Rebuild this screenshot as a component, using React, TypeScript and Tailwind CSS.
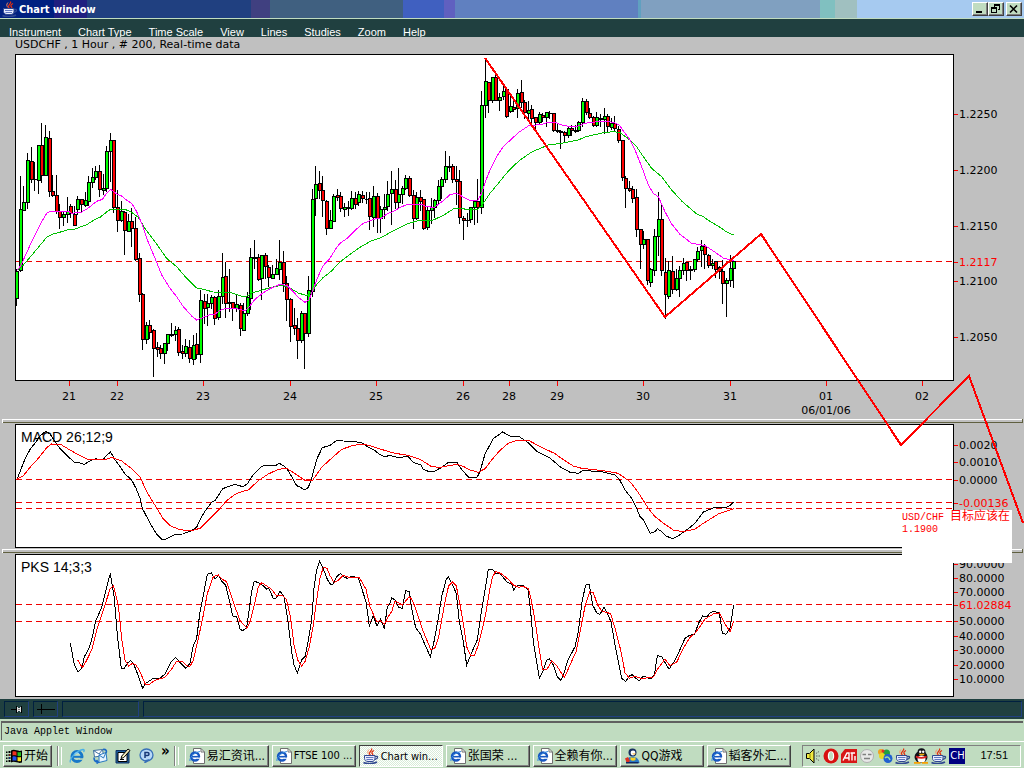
import React from "react";

type Kind = "g" | "r";
type Candle = [high: number, top: number, bottom: number, low: number, kind: Kind];

/* Chart coordinates use three units per screen pixel. */
const UNIT = 3;
const FIRST_X = 16.6;
const STEP = 3.604;

const candles: Candle[] = [
  [657, 663, 745, 765, "g"], [380, 478, 661, 663, "g"], [408, 457, 481, 481, "g"], [309, 331, 457, 475, "g"],
  [291, 334, 388, 397, "r"], [336, 388, 388, 420, "g"], [286, 286, 391, 429, "g"], [219, 286, 376, 398, "r"],
  [225, 262, 376, 376, "g"], [243, 265, 424, 440, "r"], [376, 424, 436, 440, "r"], [375, 436, 484, 490, "r"],
  [462, 484, 502, 534, "r"], [484, 493, 502, 525, "g"], [441, 484, 493, 516, "g"], [462, 469, 490, 502, "r"],
  [468, 493, 526, 526, "r"], [438, 448, 478, 492, "g"], [448, 448, 463, 484, "r"], [426, 451, 466, 470, "g"],
  [378, 397, 454, 465, "g"], [354, 382, 397, 413, "g"], [348, 364, 382, 388, "g"], [345, 364, 418, 440, "r"],
  [373, 415, 421, 434, "g"], [288, 304, 415, 425, "g"], [249, 271, 304, 395, "g"], [271, 271, 472, 486, "r"],
  [420, 472, 511, 545, "r"], [453, 484, 511, 515, "g"], [484, 487, 541, 612, "r"], [492, 514, 544, 545, "g"],
  [474, 514, 535, 590, "r"], [501, 535, 628, 632, "r"], [610, 625, 733, 753, "r"], [730, 733, 868, 897, "r"],
  [816, 826, 868, 879, "g"], [810, 826, 847, 864, "r"], [838, 841, 895, 978, "r"], [876, 892, 898, 920, "r"],
  [885, 895, 910, 924, "r"], [880, 880, 910, 941, "g"], [853, 853, 880, 900, "g"], [819, 853, 856, 860, "g"],
  [828, 841, 853, 870, "g"], [832, 838, 907, 915, "r"], [885, 904, 910, 924, "r"], [867, 889, 910, 920, "g"],
  [870, 892, 925, 936, "r"], [856, 886, 928, 942, "g"], [849, 883, 913, 926, "r"], [720, 751, 913, 936, "g"],
  [732, 754, 775, 819, "r"], [732, 760, 772, 825, "g"], [735, 742, 760, 776, "g"], [738, 742, 805, 822, "r"],
  [720, 739, 802, 808, "g"], [609, 682, 739, 760, "g"], [636, 679, 760, 803, "r"], [657, 757, 760, 785, "r"],
  [757, 757, 775, 810, "r"], [735, 763, 775, 785, "g"], [760, 766, 835, 855, "r"], [759, 790, 841, 841, "g"],
  [726, 742, 790, 797, "g"], [594, 622, 745, 778, "g"], [570, 622, 625, 654, "g"], [612, 622, 688, 690, "r"],
  [616, 616, 685, 747, "g"], [609, 616, 649, 684, "r"], [646, 652, 682, 708, "r"], [645, 673, 685, 686, "g"],
  [627, 655, 673, 673, "g"], [570, 637, 658, 687, "g"], [603, 637, 700, 723, "r"], [680, 700, 748, 810, "r"],
  [744, 748, 829, 873, "r"], [774, 826, 835, 852, "r"], [804, 835, 871, 924, "r"], [783, 790, 871, 876, "g"],
  [790, 790, 850, 954, "r"], [678, 721, 850, 858, "g"], [417, 448, 724, 738, "g"], [348, 403, 445, 497, "g"],
  [363, 400, 421, 444, "r"], [380, 421, 451, 498, "r"], [451, 454, 535, 552, "r"], [480, 511, 535, 536, "g"],
  [433, 439, 514, 514, "g"], [417, 436, 442, 450, "r"], [426, 439, 475, 484, "r"], [460, 472, 478, 500, "g"],
  [453, 472, 475, 497, "g"], [423, 445, 475, 479, "g"], [426, 445, 463, 475, "r"], [424, 433, 457, 465, "g"],
  [423, 436, 445, 456, "r"], [426, 448, 448, 459, "g"], [426, 445, 499, 537, "r"], [408, 439, 502, 528, "g"],
  [430, 439, 505, 546, "r"], [470, 478, 505, 546, "g"], [432, 472, 478, 504, "g"], [393, 433, 469, 480, "g"],
  [363, 418, 430, 522, "g"], [390, 418, 457, 474, "r"], [354, 433, 457, 474, "g"], [410, 415, 433, 459, "g"],
  [375, 385, 415, 418, "g"], [378, 385, 436, 440, "r"], [420, 436, 505, 534, "r"], [426, 442, 505, 507, "g"],
  [420, 442, 454, 480, "r"], [448, 448, 535, 537, "r"], [468, 481, 532, 537, "g"], [444, 472, 481, 520, "g"],
  [447, 451, 472, 501, "g"], [390, 409, 451, 459, "g"], [381, 388, 409, 444, "g"], [303, 349, 388, 396, "g"],
  [318, 349, 352, 363, "g"], [342, 349, 388, 398, "r"], [350, 388, 394, 462, "r"], [360, 394, 502, 519, "r"],
  [500, 505, 511, 567, "r"], [490, 511, 511, 528, "g"], [472, 472, 508, 517, "g"], [450, 454, 472, 522, "g"],
  [387, 454, 472, 516, "r"], [123, 166, 472, 489, "g"], [30, 94, 166, 201, "g"], [97, 97, 151, 186, "r"],
  [82, 82, 151, 157, "g"], [63, 82, 151, 152, "r"], [129, 142, 151, 180, "g"], [99, 124, 139, 148, "g"],
  [115, 118, 199, 203, "r"], [138, 169, 184, 188, "g"], [155, 172, 178, 184, "r"], [117, 130, 175, 202, "g"],
  [90, 127, 157, 172, "r"], [151, 157, 187, 205, "r"], [153, 181, 190, 205, "g"], [167, 178, 206, 220, "r"],
  [203, 203, 217, 235, "r"], [187, 193, 217, 222, "g"], [190, 196, 202, 214, "r"], [187, 187, 202, 230, "g"],
  [183, 190, 190, 204, "g"], [190, 190, 241, 244, "r"], [220, 241, 244, 248, "g"], [240, 244, 247, 294, "g"],
  [244, 247, 256, 273, "r"], [228, 235, 256, 263, "g"], [225, 235, 241, 255, "r"], [225, 241, 244, 248, "g"],
  [213, 217, 241, 245, "g"], [144, 154, 217, 228, "g"], [147, 154, 187, 192, "r"], [174, 190, 202, 205, "r"],
  [199, 202, 226, 228, "r"], [187, 202, 226, 230, "g"], [193, 205, 208, 228, "g"], [174, 199, 208, 249, "g"],
  [193, 199, 229, 243, "r"], [205, 220, 232, 237, "g"], [198, 220, 235, 242, "r"], [228, 238, 271, 276, "r"],
  [271, 271, 382, 390, "r"], [379, 385, 415, 471, "r"], [393, 415, 422, 425, "r"], [410, 418, 445, 456, "r"],
  [417, 442, 538, 558, "r"], [538, 538, 583, 654, "r"], [543, 568, 583, 595, "g"], [568, 568, 691, 702, "r"],
  [655, 658, 697, 708, "g"], [537, 559, 661, 675, "g"], [426, 508, 559, 615, "g"], [465, 508, 661, 675, "r"],
  [625, 667, 733, 805, "r"], [633, 661, 739, 745, "g"], [620, 664, 718, 731, "r"], [657, 685, 718, 722, "g"],
  [648, 661, 685, 738, "g"], [624, 640, 661, 672, "g"], [636, 637, 661, 690, "r"], [650, 658, 661, 687, "g"],
  [627, 628, 658, 663, "g"], [592, 604, 628, 633, "g"], [570, 589, 601, 648, "g"], [583, 589, 613, 654, "r"],
  [612, 616, 646, 652, "r"], [628, 640, 646, 654, "g"], [633, 634, 658, 682, "r"], [650, 652, 664, 684, "r"],
  [630, 664, 700, 759, "r"], [684, 691, 700, 800, "g"], [615, 655, 691, 708, "g"], [630, 634, 655, 711, "g"],
];

const fastAverage =
  "52,660 60,650 70,630 95,575 110,545 125,515 140,490 152,484 205,484 215,490 245,486 265,474 290,454 307,448 320,430 332,418 350,432 365,438 375,447 395,460 410,485 425,520 440,565 465,625 485,675 510,715 530,740 550,770 575,798 590,810 600,806 630,794 645,792 665,778 690,775 715,777 735,782 745,774 765,748 790,728 810,716 840,703 860,706 875,720 895,742 915,757 927,750 938,722 950,690 965,655 975,640 990,625 1005,600 1020,580 1040,566 1065,541 1090,520 1120,508 1145,504 1160,492 1180,484 1205,470 1225,463 1265,463 1280,470 1303,472 1325,456 1350,434 1370,430 1395,444 1410,451 1433,452 1445,430 1455,398 1470,360 1490,320 1510,290 1528,273 1555,248 1585,228 1630,222 1645,217 1665,217 1685,225 1710,230 1730,230 1755,220 1785,216 1815,213 1840,217 1857,224 1870,243 1890,270 1907,305 1925,350 1945,405 1960,430 1975,440 1995,485 2015,522 2040,553 2075,580 2095,583 2115,587 2140,603 2170,624 2201,632";
const slowAverage =
  "55,658 70,645 100,610 140,562 160,552 185,545 205,539 225,537 260,524 285,508 300,502 320,486 332,478 375,478 395,487 415,502 435,535 465,575 500,625 530,650 560,685 590,714 605,717 640,726 690,727 725,739 740,739 760,727 780,722 810,713 845,706 870,714 895,729 920,737 935,727 950,703 970,682 995,663 1015,640 1050,613 1080,592 1115,572 1145,562 1175,545 1205,530 1225,520 1260,511 1300,510 1330,496 1360,477 1380,475 1400,478 1435,477 1450,460 1470,430 1495,400 1515,375 1530,358 1560,330 1595,306 1645,285 1690,279 1735,270 1755,261 1810,248 1840,245 1860,248 1885,266 1910,290 1930,320 1955,355 1985,380 2015,420 2045,453 2090,492 2110,500 2130,514 2160,532 2180,546 2201,555";
const macdLine =
  "52,297 60,275 75,237 92,205 105,190 120,168 137,154 150,162 165,185 180,205 200,226 222,246 240,249 253,253 270,243 287,236 308,240 320,226 332,216 345,240 362,262 375,282 395,300 408,325 420,355 427,385 440,410 455,438 470,463 485,478 495,478 525,463 548,462 570,454 590,442 600,420 615,393 635,367 645,362 668,326 690,318 705,313 728,320 742,312 758,286 785,259 800,256 828,256 838,250 852,258 865,272 890,317 900,321 914,330 925,322 935,295 950,238 967,203 990,196 1010,181 1030,183 1065,185 1090,190 1105,202 1125,212 1140,224 1155,230 1170,226 1182,230 1195,232 1225,230 1240,248 1262,254 1270,268 1285,274 1305,273 1325,262 1345,247 1370,246 1385,268 1405,291 1430,294 1440,275 1455,222 1480,176 1508,156 1530,168 1545,171 1558,170 1570,178 1585,188 1610,214 1650,234 1680,260 1710,277 1735,280 1750,271 1810,276 1845,285 1858,298 1875,330 1895,355 1910,385 1920,410 1930,420 1950,460 1965,455 1972,446 1985,455 1998,468 2018,476 2035,468 2052,455 2070,442 2085,430 2110,396 2145,382 2180,382 2190,376 2201,366";
const macdSignal =
  "52,297 70,287 95,256 115,235 140,203 155,192 185,195 210,210 235,224 260,237 320,237 335,232 365,243 390,262 420,290 440,335 470,384 490,417 510,437 540,449 570,453 600,445 625,420 660,385 680,362 705,343 728,334 745,330 775,302 805,282 835,268 860,265 885,281 915,301 937,302 965,262 1000,230 1025,208 1060,196 1090,192 1120,200 1140,207 1185,220 1225,226 1260,238 1295,260 1320,262 1370,253 1390,259 1410,270 1435,277 1455,266 1475,240 1500,211 1525,190 1550,181 1585,181 1610,194 1640,209 1665,221 1690,239 1720,258 1745,265 1810,272 1855,280 1890,305 1915,338 1945,385 1965,410 1995,433 2020,450 2050,455 2085,447 2110,430 2155,402 2201,386";
const pksFast =
  "211,294 222,355 234,382 246,368 253,335 268,308 278,272 287,228 305,188 318,135 331,85 343,160 352,270 364,371 373,370 382,355 392,346 402,360 412,385 428,430 436,416 458,401 480,400 495,387 512,352 527,337 540,353 557,370 570,355 580,300 590,280 600,200 612,140 622,88 634,84 645,103 656,90 665,108 677,120 690,175 698,213 710,215 720,252 728,257 740,248 748,190 755,140 763,108 778,115 790,122 800,132 806,130 820,160 828,160 840,138 852,155 862,215 875,320 882,360 892,383 905,345 915,335 925,285 935,225 942,130 950,75 959,49 970,72 982,103 992,119 1000,117 1010,95 1021,86 1032,96 1042,100 1055,94 1075,98 1085,130 1098,170 1108,243 1120,212 1131,244 1142,222 1153,252 1162,185 1168,180 1175,158 1185,165 1195,186 1207,190 1217,137 1228,140 1235,190 1247,248 1262,268 1275,300 1291,335 1302,290 1315,220 1325,155 1338,105 1345,95 1355,115 1369,145 1378,230 1390,290 1400,360 1412,330 1432,284 1445,195 1455,135 1465,73 1478,73 1487,86 1500,85 1520,110 1535,118 1541,135 1552,121 1570,121 1584,133 1592,200 1600,290 1610,350 1618,400 1630,375 1640,345 1648,341 1660,360 1672,395 1682,406 1690,392 1702,350 1712,330 1725,305 1735,260 1746,170 1757,120 1768,118 1778,180 1790,203 1800,208 1812,186 1822,205 1833,230 1845,300 1855,350 1865,400 1877,409 1888,393 1897,389 1907,400 1918,407 1930,393 1952,402 1963,390 1972,332 1985,335 2007,373 2022,350 2035,325 2055,280 2068,271 2083,268 2098,230 2108,213 2120,216 2132,202 2143,199 2158,204 2167,264 2178,268 2190,250 2201,180";
const pksSlow =
  "233,345 247,368 258,350 275,315 293,245 310,195 330,133 340,122 355,180 365,280 375,345 386,363 397,355 408,360 420,380 436,418 448,418 465,406 495,397 515,372 530,348 545,348 560,362 570,364 580,345 595,280 610,210 622,145 640,95 655,90 667,103 680,110 690,140 703,180 720,227 740,249 750,232 763,180 775,125 785,113 800,123 815,133 830,153 848,151 860,165 872,220 882,300 893,345 905,363 915,350 928,305 940,240 950,165 960,100 970,66 981,70 990,92 1002,112 1015,106 1030,91 1045,96 1078,98 1098,133 1110,185 1120,208 1130,230 1142,226 1153,238 1165,215 1175,200 1185,168 1207,180 1228,155 1238,167 1255,215 1268,255 1293,315 1305,308 1315,280 1325,225 1335,170 1346,122 1357,111 1369,123 1380,180 1390,235 1400,305 1412,332 1423,332 1435,300 1450,240 1460,190 1468,140 1477,98 1487,79 1505,87 1525,103 1540,120 1555,127 1568,124 1585,130 1595,170 1607,240 1617,310 1628,373 1640,375 1655,348 1670,362 1693,398 1710,360 1728,320 1742,250 1755,185 1769,140 1780,143 1792,178 1805,198 1832,206 1845,250 1862,315 1875,383 1888,400 1905,394 1925,401 1960,396 1973,372 1995,342 2010,362 2030,352 2050,310 2070,277 2085,265 2100,245 2115,222 2140,207 2158,204 2172,232 2190,260 2201,228";

const LABEL = "font-['DejaVu_Sans',sans-serif]";
const TAHOMA = "font-['DejaVu_Sans_Condensed','DejaVu_Sans',sans-serif]";

const snap = (v: number) => Math.floor(v / UNIT) * UNIT;

function CandleShape({ index, candle }: { index: number; candle: Candle }) {
  const [high, top, bottom, low, kind] = candle;
  const x = Math.floor(FIRST_X + STEP * index) * UNIT;
  const y0 = snap(top);
  const y1 = snap(bottom) + UNIT;
  return (
    <g>
      <rect x={x} y={snap(high)} width={UNIT} height={snap(low) - snap(high) + UNIT} fill="#000" />
      <rect x={x - UNIT} y={y0} width={4 * UNIT} height={y1 - y0} fill="#000" />
      {y1 - y0 > 2 * UNIT && (
        <rect x={x} y={y0 + UNIT} width={2 * UNIT} height={y1 - y0 - 2 * UNIT} fill={kind === "g" ? "#00ff00" : "#ff0000"} />
      )}
    </g>
  );
}

function DashLine({ y }: { y: number }) {
  return <line x1="48" x2="2859" y1={y} y2={y} stroke="#f00000" strokeWidth="3" strokeDasharray="18 12" />;
}

function Curve({ points, color }: { points: string; color: string }) {
  return <polyline points={points} fill="none" stroke={color} strokeWidth="3" />;
}

type Mark = { y: number; text: string; live?: boolean };

function ValueAxis({ marks }: { marks: Mark[] }) {
  return (
    <svg className={`w-[70px] shrink-0 self-stretch overflow-visible text-[11px] ${LABEL}`}>
      {marks.map((m) => (
        <g key={m.text}>
          <rect x="0" y={m.y} width="4" height="1" fill="#ff0000" />
          <text x="5" y={m.y + 4} fill={m.live ? "#ff0000" : "#000"}>
            {m.text}
          </text>
        </g>
      ))}
    </svg>
  );
}

function Plot({ viewBox, label, children }: { viewBox: string; label: string; children: React.ReactNode }) {
  return (
    <svg
      role="img"
      aria-label={label}
      viewBox={viewBox}
      preserveAspectRatio="none"
      shapeRendering="crispEdges"
      className="absolute inset-0 h-full w-full"
    >
      {children}
    </svg>
  );
}

const dates = [
  [69, "21"], [117, "22"], [203, "23"], [290, "24"], [376, "25"], [463, "26"],
  [509, "28"], [557, "29"], [643, "30"], [730, "31"], [826, "01"], [922, "02"],
] as const;

function DateAxis() {
  return (
    <div className="pl-4 pr-[71px]">
      <svg className={`block h-[38px] w-full text-[11px] ${LABEL}`}>
        {dates.map(([x, d]) => {
          const at = `${((x - 16) / 937) * 100}%`;
          return (
            <g key={d}>
              <line x1={at} x2={at} y1="0" y2="5" stroke="#ff0000" shapeRendering="crispEdges" />
              <text x={at} y="19" textAnchor="middle">
                {d}
              </text>
            </g>
          );
        })}
        <text x={`${((826 - 16) / 937) * 100}%`} y="33" textAnchor="middle">
          06/01/06
        </text>
      </svg>
    </div>
  );
}

function Splitter() {
  return (
    <div className="ml-[2px] mr-px flex h-1 border-x border-l-white border-r-[#606040]">
      <div className="flex-1 border-y border-b-[#606040] border-t-white" />
    </div>
  );
}

/* ---------- icons ---------- */

function JavaCup({ size = "h-4 w-4" }: { size?: string }) {
  return (
    <svg viewBox="0 0 16 16" className={`${size} shrink-0`} fill="none" aria-hidden="true">
      <path d="M8.500 0.500c1.500 2-3 3.200-2 5.500 .3.7 1 1.200 1 2M11 2.500c-2.500 1.200-2.500 2.500-1.500 3.500 .6.7.2 1.500-.5 2" stroke="#e03010" strokeWidth="1.300" />
      <path d="M6 1.500c-1.800 2-1.500 3.500 0 5" stroke="#ff9060" strokeWidth="0.900" />
      <path d="M1.500 7.500h10.500v3c0 1.800-1.500 3-3 3H5c-2 0-3.500-1.500-3.500-3z" fill="#e8ecff" stroke="#304890" />
      <path d="M3 9.500h7.500M3.500 11.500h6.500" stroke="#6078c0" />
      <path d="M12 8.500c3.500-1 3.500 2-.5 3" stroke="#304890" strokeWidth="1.300" />
      <path d="M.5 14.500c3 1.500 10 1.500 13.500-.5" stroke="#304890" strokeWidth="1.600" />
    </svg>
  );
}

function ExplorerGlyph() {
  return (
    <svg viewBox="0 0 16 16" className="h-4 w-4 shrink-0" fill="none" aria-hidden="true">
      <circle cx="8" cy="8.500" r="5" stroke="#1878c8" strokeWidth="3" />
      <path d="M3.500 8.800h10" stroke="#1878c8" strokeWidth="2" />
      <path d="M10 10.300h5v1.500h-5z" fill="#c0dcc0" />
      <path d="M1.500 14.500C0 12 6 3 14 1.500c1.500 0 1.500 1.500.5 2.500" stroke="#48b0e8" strokeWidth="1.300" />
      <path d="M5.500 6c1-1.200 3-1.500 4.500-.5" stroke="#a0e0ff" strokeWidth="1" />
    </svg>
  );
}

function PageIcon() {
  return (
    <svg viewBox="0 0 16 16" className="h-4 w-4 shrink-0" fill="none" aria-hidden="true">
      <path d="M4.500.5h7.500l3.500 3.500v11.500h-11z" fill="#fff" stroke="#707070" />
      <path d="M12 .5v3.500h3.500" stroke="#707070" />
      <circle cx="6" cy="8.500" r="4" fill="#fff" stroke="#1858c0" strokeWidth="2.400" />
      <path d="M2.500 8.700h7" stroke="#1858c0" strokeWidth="1.600" />
      <path d="M8 9.600h3.500v1.200H8z" fill="#fff" />
      <path d="M1 13C0 10.500 4.500 4.500 11 3.500" stroke="#3890e0" />
    </svg>
  );
}

function WindowsFlag() {
  return (
    <svg viewBox="0 0 18 16" className="h-4 w-[18px] shrink-0" aria-hidden="true">
      <path d="M6 2.500c4-2 6.500 1.500 11 0v12c-4.500 1.500-7-2-11 0z" fill="#000" />
      <path d="M7.500 3.600c1.500-.6 2.800-.3 4 .1v4c-1.300-.4-2.500-.6-4-.1z" fill="#f03020" />
      <path d="M12.500 4c1.200.3 2.200.4 3.500.1v3.900c-1.300.3-2.300.2-3.500-.1z" fill="#20c020" />
      <path d="M7.500 8.700c1.500-.6 2.800-.3 4 .1v4c-1.300-.4-2.500-.6-4-.1z" fill="#2050f0" />
      <path d="M12.500 9c1.200.3 2.200.4 3.500.1v3.900c-1.300.3-2.300.2-3.500-.1z" fill="#f8e020" />
      <path d="M1 3.500h1.500v1.500H1zM3.500 3h2v2h-2zM1 6.500h1.500V8H1zM3.500 6h2v2h-2zM1 9.500h1.500V11H1zM3.500 9h2v2h-2zM1 12.500h1.500V14H1zM3.500 12h2v2h-2z" fill="#000" />
      <path d="M4 6.500h1v1H4z" fill="#f03020" />
      <path d="M4 9.500h1v1H4z" fill="#2050f0" />
    </svg>
  );
}

function OutlookIcon() {
  return (
    <svg viewBox="0 0 16 16" className="h-4 w-4 shrink-0" fill="none" aria-hidden="true">
      <path d="M1.500 2.500l9-1 1 6-9 1.500z" fill="#fff" stroke="#4070a0" />
      <path d="M1.500 2.500l5.500 3.500 3.500-4.500" stroke="#4070a0" />
      <path d="M7 7l7-2.500 1 8-8 2z" fill="#e8f4ff" stroke="#2878c0" />
      <path d="M11 1.500c3-.5 4 1.500 3 3.500M2 9.500c0 3 1.500 4.500 4 4.500l-1.500-2M4.500 15.500l2-1.500" stroke="#1868c8" strokeWidth="1.600" />
      <path d="M7 7l4.500 3L14 4.500" stroke="#2878c0" />
    </svg>
  );
}

function DesktopIcon() {
  return (
    <svg viewBox="0 0 16 16" className="h-4 w-4 shrink-0" fill="none" aria-hidden="true">
      <path d="M1 2.500h13v12.500H1z" fill="#2060a0" stroke="#103060" />
      <path d="M3 4.500h9v9H3z" fill="#fff" stroke="#000" />
      <path d="M6 10.500l.8-2.500 6.200-7 2 1.500-6.200 7z" fill="#f8f0c0" stroke="#000" />
      <path d="M5 11.500h4" stroke="#000" />
    </svg>
  );
}

function PlayerIcon() {
  return (
    <svg viewBox="0 0 16 16" className="h-4 w-4 shrink-0" fill="none" aria-hidden="true">
      <ellipse cx="8.500" cy="7" rx="6.500" ry="6" fill="#b8d8f8" stroke="#3870b8" strokeWidth="1.300" />
      <path d="M6 15c2 .5 5-2 5.500-4l-4 1z" fill="#3870b8" />
      <path d="M7 10V4.500h2.500c2 0 2 3 0 3H7" stroke="#183878" strokeWidth="1.500" />
    </svg>
  );
}

function Penguin() {
  return (
    <svg viewBox="0 0 16 16" className="h-4 w-4 shrink-0" aria-hidden="true">
      <ellipse cx="8" cy="9" rx="6.500" ry="6" fill="#101018" />
      <ellipse cx="8.500" cy="4.500" rx="4" ry="4.200" fill="#101018" />
      <ellipse cx="8.500" cy="11" rx="4" ry="3.600" fill="#fff" />
      <circle cx="7.200" cy="3.800" r="1.200" fill="#fff" />
      <circle cx="10.200" cy="3.800" r="1.200" fill="#fff" />
      <path d="M5.500 5.800h6.500l-1.500 1.400h-3.500z" fill="#f8b000" />
      <path d="M3 7.800c3 1.500 7.500 1.500 10.500 0l.3 1.800c-3.500 1.600-7.500 1.600-11 0z" fill="#e02020" />
      <path d="M1 14h6.500v1.800H1zM9 14h6v1.800H9z" fill="#f8a000" />
    </svg>
  );
}

function GameIcon() {
  return (
    <svg viewBox="0 0 16 16" className="h-4 w-4 shrink-0" aria-hidden="true">
      <circle cx="8.500" cy="4.500" r="4" fill="#183060" />
      <circle cx="9" cy="5" r="2.400" fill="#fff" />
      <path d="M8 5.500h4l-1.800 1.300z" fill="#f8a000" />
      <path d="M2 15c0-4 3-6.500 6.500-6.500S15 11 15.500 15z" fill="#2878c8" />
      <path d="M1 10.500l3-1.500 2 4-3 2.500z" fill="#e03020" />
      <path d="M6.500 9c1.500 1 3.500 1 5 0v3c-1.500 1-3.500 1-5 0z" fill="#f8d020" />
      <path d="M2 14h12.500v1.500H2z" fill="#102860" />
    </svg>
  );
}

function Speaker() {
  return (
    <svg viewBox="0 0 16 16" className="h-4 w-4 shrink-0" fill="none" aria-hidden="true">
      <path d="M1.500 5.500h3l4.500-4.500v14l-4.500-4.500h-3z" fill="#f0e840" stroke="#000" />
      <path d="M5 5.500v5" stroke="#808000" />
      <path d="M11 8h4M11 5.500l3-2M11 10.500l3 2" stroke="#606060" strokeDasharray="1.500 1" />
    </svg>
  );
}

function OperaIcon() {
  return (
    <svg viewBox="0 0 16 16" className="h-4 w-4 shrink-0" aria-hidden="true">
      <ellipse cx="8" cy="8" rx="7.500" ry="7.500" fill="#d81010" />
      <ellipse cx="8" cy="8" rx="3.200" ry="4.800" fill="#fff" />
      <ellipse cx="8" cy="8" rx="2" ry="4" fill="#c0dcc0" />
    </svg>
  );
}

function GraphicsIcon() {
  return (
    <svg viewBox="0 0 16 16" className="h-4 w-4 shrink-0" fill="none" aria-hidden="true">
      <path d="M4 1h12v14H0V6z" fill="#d81818" />
      <path d="M2 12.500L6 5h2v7.500M4 10h4M9.500 5h4.500M11 5v7.500M14 8v4.500" stroke="#fff" strokeWidth="1.400" />
    </svg>
  );
}

function FaceIcon() {
  return (
    <svg viewBox="0 0 16 16" className="h-4 w-4 shrink-0" fill="none" aria-hidden="true">
      <circle cx="8" cy="8" r="6.500" fill="#e8e8e8" stroke="#b0b0b0" />
      <path d="M3.500 6.500h3.500M9 6.500h3.500M5 10.500h6" stroke="#808080" strokeWidth="1.300" />
    </svg>
  );
}

function MessengerIcon() {
  return (
    <svg viewBox="0 0 16 16" className="h-4 w-4 shrink-0" aria-hidden="true">
      <circle cx="4" cy="4" r="3" fill="#f0a020" />
      <circle cx="9.500" cy="5" r="3.500" fill="#20a040" />
      <circle cx="5" cy="8" r="3" fill="#e8d820" />
      <circle cx="11" cy="10.500" r="4.500" fill="#2060d0" />
      <path d="M8 10c2-2 4-1 5 2" stroke="#a0e0a0" strokeWidth="1.500" fill="none" />
      <circle cx="6" cy="3" r="1.500" fill="#e03020" />
    </svg>
  );
}

/* ---------- window parts ---------- */

const raised = "border border-b-[#404040] border-l-white border-r-[#404040] border-t-white shadow-[inset_-1px_-1px_0_#808080]";

function TitleBar() {
  const box = `flex h-[14px] w-4 items-center justify-center bg-[#c0dcc0] ${raised}`;
  return (
    <header className="flex h-[19px] items-center border-b border-[#c0dcc0] bg-[linear-gradient(90deg,#002080_5.3%,#202080_5.3%_8.5%,#204080_8.5%_24.5%,#404080_24.5%_26.4%,#406080_26.4%_39.4%,#4060c0_39.4%_43.4%,#6060c0_43.4%_44.4%,#6080c0_44.4%_62.3%,#60a0c0_62.3%_62.6%,#80a0c0_62.6%_80.1%,#80c0c0_80.1%_81.5%,#a0c0c0_81.5%_83.7%,#a6caf0_83.7%)] pl-[2px] pr-[2px]">
      <JavaCup />
      <h1 className={`ml-px flex-1 text-[11px] font-bold leading-none text-white ${TAHOMA}`}>Chart window</h1>
      <button type="button" aria-label="Minimize" className={box}>
        <svg viewBox="0 0 12 12" className="h-3 w-3" shapeRendering="crispEdges" aria-hidden="true">
          <path d="M2 8h6v2H2z" />
        </svg>
      </button>
      <button type="button" aria-label="Restore" className={box}>
        <svg viewBox="0 0 12 12" className="h-3 w-3" shapeRendering="crispEdges" fill="none" stroke="#000" aria-hidden="true">
          <path d="M4.500 4V1.500h5v5H8M4 2.500h6M1.500 5.500h5v4h-5zM1 4.500h6" />
        </svg>
      </button>
      <button type="button" aria-label="Close" className={`ml-[2px] ${box}`}>
        <svg viewBox="0 0 12 12" className="h-3 w-3" aria-hidden="true">
          <path d="M2 2.500l7 7M9 2.500l-7 7" stroke="#000" strokeWidth="1.600" />
        </svg>
      </button>
    </header>
  );
}

const menus = ["Instrument", "Chart Type", "Time Scale", "View", "Lines", "Studies", "Zoom", "Help"];

function MenuBar() {
  return (
    <nav className="flex h-[18px] items-end gap-[17px] overflow-hidden bg-[#204040] pl-[9px] font-['Liberation_Sans',sans-serif] text-[11px] leading-[9px] text-white">
      {menus.map((m) => (
        <button key={m} type="button">
          {m}
        </button>
      ))}
    </nav>
  );
}

const cell = "border border-b-[#204080] border-l-[#002040] border-r-[#204080] border-t-[#002040]";

function ToolStrip() {
  return (
    <div className="flex h-5 gap-1 bg-[#204040] py-[2px] pl-1 pr-[2px]">
      <button type="button" aria-label="Pin window" className={`flex w-[25px] items-center justify-center ${cell}`}>
        <svg viewBox="0 0 12 9" className="h-[9px] w-3" shapeRendering="crispEdges" aria-hidden="true">
          <path d="M0 4h5v1H0zM5 1h1v7H5zM10 1h1v7h-1z" />
          <path d="M6 2h1v1h2V2h1v5H9V6H7v1H6z" fill="#e0e0e0" />
          <path d="M7 4h2v1H7z" fill="#808080" />
        </svg>
      </button>
      <button type="button" aria-label="Crosshair" className={`flex w-[25px] items-center justify-center ${cell}`}>
        <svg viewBox="0 0 18 10" className="h-[10px] w-[18px]" shapeRendering="crispEdges" aria-hidden="true">
          <path d="M0 5h18v1H0zM4 0h1v10H4z" />
        </svg>
      </button>
      <div className={`w-[77px] ${cell}`} />
      <div className={`flex-1 ${cell}`} />
    </div>
  );
}

const tasks = [
  { text: "易汇资讯...", icon: <PageIcon />, cjk: true },
  { text: "FTSE 100 ...", icon: <PageIcon /> },
  { text: "Chart win...", icon: <JavaCup />, active: true },
  { text: "张国荣 ...", icon: <PageIcon />, cjk: true },
  { text: "全赖有你...", icon: <PageIcon />, cjk: true },
  { text: "QQ游戏", icon: <GameIcon />, cjk: true },
  { text: "韬客外汇...", icon: <PageIcon />, cjk: true },
];

function Divider() {
  return <span className="h-[20px] w-[2px] shrink-0 border-l border-r border-l-[#808080] border-r-white" />;
}

function TaskBar() {
  const text = "font-['DejaVu_Sans_Condensed','Noto_Sans_CJK_SC',sans-serif] text-[12px] leading-none";
  return (
    <footer className={`flex h-[27px] items-center border-t border-white pl-[3px] pr-[3px] pt-px ${text}`}>
      <button type="button" className={`flex h-[22px] w-[49px] shrink-0 items-center gap-px pl-px ${raised}`}>
        <WindowsFlag />
        <span className="whitespace-nowrap">开始</span>
      </button>
      <span className="ml-[5px] flex gap-[2px]">
        <Divider />
        <span className="h-[18px] w-[2px] self-center border-l border-white" />
      </span>
      <div className="ml-[6px] flex shrink-0 items-center gap-[7px]">
        <button type="button" aria-label="Internet Explorer"><ExplorerGlyph /></button>
        <button type="button" aria-label="Mail"><OutlookIcon /></button>
        <button type="button" aria-label="Show desktop"><DesktopIcon /></button>
        <button type="button" aria-label="Media player"><PlayerIcon /></button>
        <button type="button" aria-label="More shortcuts" className="-mt-2 text-[15px] font-bold leading-none">»</button>
      </div>
      <span className="ml-1 flex gap-[2px]">
        <Divider />
        <span className="h-[18px] w-[2px] self-center border-l border-white" />
      </span>
      <div className="ml-[5px] flex min-w-0 flex-1 gap-[3px]">
        {tasks.map((t) => (
          <button
            key={t.text}
            type="button"
            className={`flex h-[22px] min-w-0 flex-1 items-center gap-[2px] overflow-hidden whitespace-nowrap pl-[3px] ${
              t.cjk ? "text-[12px]" : "text-[11px]"
            } ${
              t.active
                ? "border border-b-white border-l-[#404040] border-r-white border-t-[#404040] bg-[repeating-conic-gradient(#ffffff_0_25%,#d8ecd8_0_50%)] bg-[length:2px_2px] pt-px"
                : raised
            }`}
          >
            {t.icon}
            <span>{t.text}</span>
          </button>
        ))}
      </div>
      <div className="ml-3 flex h-[22px] shrink-0 items-center border border-b-white border-l-[#808080] border-r-white border-t-[#808080] pl-[2px] pr-3">
        <div className="flex gap-[2px]">
          <Speaker />
          <OperaIcon />
          <GraphicsIcon />
          <FaceIcon />
          <MessengerIcon />
          <JavaCup />
          <Penguin />
          <JavaCup />
          <span className="flex h-4 w-4 items-center justify-center bg-[#000080] text-[11px] text-white">CH</span>
        </div>
        <time className="ml-[15px] font-['Liberation_Sans',sans-serif] text-[11px]">17:51</time>
      </div>
    </footer>
  );
}

const caption = "relative pl-[5px] pt-[5px] font-['Liberation_Sans',sans-serif] text-[14px] leading-[15px]";

export default function App() {
  return (
    <div className="relative flex min-h-screen flex-col overflow-hidden bg-[#c0dcc0] text-black">
      <TitleBar />
      <MenuBar />

      <main className="flex flex-col bg-[#c0c0c0]">
        <p className={`h-[17px] pl-[15px] text-[11px] leading-[15px] ${LABEL}`}>USDCHF , 1 Hour , # 200, Real-time data</p>
        <section className="flex h-[327px] pl-[15px]">
          <div className="relative flex-1 border border-black bg-white">
            <Plot viewBox="48 15 2811 975" label="USDCHF hourly candles">
              <DashLine y={634.5} />
              {candles.map((c, i) => (
                <CandleShape key={i} index={i} candle={c} />
              ))}
              <Curve points={slowAverage} color="#00c000" />
              <Curve points={fastAverage} color="#ff00ff" />
            </Plot>
          </div>
          <ValueAxis
            marks={[
              { y: 60, text: "1.2250" },
              { y: 116, text: "1.2200" },
              { y: 172, text: "1.2150" },
              { y: 208, text: "1.2117", live: true },
              { y: 227, text: "1.2100" },
              { y: 283, text: "1.2050" },
            ]}
          />
        </section>
        <DateAxis />
        <Splitter />
        <section className="mt-px flex h-[124px] pl-[15px]">
          <div className="relative flex-1 border border-black bg-white">
            <h2 className={caption}>MACD 26;12;9</h2>
            <Plot viewBox="48 135 2811 366" label="MACD">
              <DashLine y={298.5} />
              <DashLine y={367.5} />
              <DashLine y={385.5} />
              <Curve points={macdLine} color="#000" />
              <Curve points={macdSignal} color="#ff0000" />
            </Plot>
          </div>
          <ValueAxis
            marks={[
              { y: 21, text: "0.0020" },
              { y: 38, text: "0.0010" },
              { y: 56, text: "0.0000" },
              { y: 79, text: "-0.00136", live: true },
            ]}
          />
        </section>
        <div className="py-px">
          <Splitter />
        </div>
        <section className="mb-[2px] flex h-[143px] pl-[15px]">
          <div className="relative flex-1 border border-black bg-white">
            <h2 className={caption}>PKS 14;3;3</h2>
            <Plot viewBox="48 30 2811 423" label="PKS">
              <DashLine y={178.5} />
              <DashLine y={229.5} />
              <Curve points={pksFast} color="#000" />
              <Curve points={pksSlow} color="#ff0000" />
            </Plot>
          </div>
          <ValueAxis
            marks={[
              { y: 10, text: "90.0000" },
              { y: 24, text: "80.0000" },
              { y: 38, text: "70.0000" },
              { y: 51, text: "61.02884", live: true },
              { y: 67, text: "50.0000" },
              { y: 82, text: "40.0000" },
              { y: 96, text: "30.0000" },
              { y: 111, text: "20.0000" },
              { y: 125, text: "10.0000" },
            ]}
          />
        </section>
      </main>

      <ToolStrip />

      <div className="flex h-[22px] flex-col px-px pb-px pt-px">
        <div className="h-px bg-white" />
        <p className="mt-px flex-1 border-l border-t-2 border-[#606060] pl-[2px] font-['Liberation_Mono',monospace] text-[10px] leading-[17px]">
          Java Applet Window
        </p>
      </div>

      <TaskBar />

      {/* hand-drawn forecast over the whole window */}
      <aside className="absolute left-[902px] top-[510px] h-[53px] w-[110px] whitespace-nowrap bg-white pt-px font-['Liberation_Mono','Noto_Sans_CJK_SC',monospace] text-[10px] leading-[12px] text-[#ff0000]">
        USD/CHF <span className="text-[12px]">目标应该在</span>
        <br />
        1.1900
      </aside>
      <svg className="pointer-events-none absolute left-0 top-0 h-[768px] w-[1024px]" fill="none" shapeRendering="crispEdges" aria-hidden="true">
        <polyline points="485,58 665,317 761,234 901,445 969,376 1023,523" stroke="#ff0000" strokeWidth="2" />
      </svg>
    </div>
  );
}
